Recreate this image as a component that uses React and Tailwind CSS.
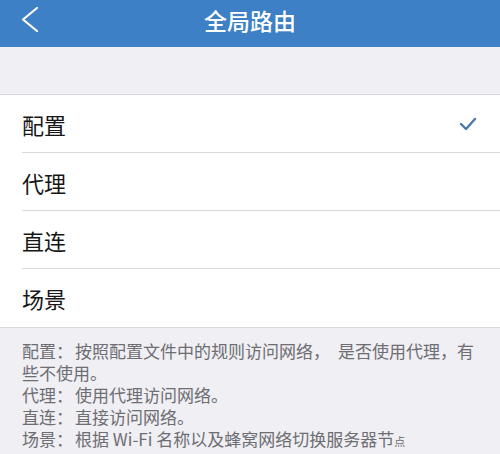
import React from "react";

const rows = ["配置", "代理", "直连", "场景"];

export default function App() {
  return (
    <div
      className="w-[500px] h-[454px] overflow-hidden bg-[#efeff4]"
      style={{ fontFamily: '"Noto Sans CJK SC", "Noto Sans", sans-serif' }}
    >
      <div className="relative h-[47px] bg-[#3d80c6] flex items-center justify-center">
        <svg
          className="absolute left-[20px] top-[6px]"
          width="20"
          height="28"
          viewBox="0 0 20 28"
          fill="none"
        >
          <polyline
            points="17,2 3,13.5 17,25"
            stroke="white"
            strokeWidth="2.2"
            strokeLinecap="round"
            strokeLinejoin="round"
          />
        </svg>
        <span className="text-white text-[23px] font-medium leading-none -mt-[6px]">
          全局路由
        </span>
      </div>
      <div className="h-[47px]" />
      <div className="bg-white border-t border-b border-[#d8d8dc]">
        {rows.map((r, i) => (
          <div key={r} className="pl-[22px] h-[58px]">
            <div
              className={
                "h-full flex items-center justify-between pr-[23px] " +
                (i < rows.length - 1 ? "border-b border-[#d9d9dc]" : "")
              }
            >
              <span className="text-[22px] text-[#161616] leading-none">{r}</span>
              {i === 0 && (
                <svg width="18" height="14" viewBox="0 0 18 14" fill="none">
                  <polyline
                    points="2,7 7,12 16,2"
                    stroke="#4a7aa8"
                    strokeWidth="2.4"
                    strokeLinecap="round"
                    strokeLinejoin="round"
                  />
                </svg>
              )}
            </div>
          </div>
        ))}
      </div>
      <div className="pl-[22px] pr-[20px] pt-[12px] text-[17px] leading-[22px] text-[#6d6d72]">
        <p>
          配置：<span className="ml-[2px]">按照配置文件中的规则访问网络，</span>
          <span className="inline-block w-[8px]" />
          是否使用代理，有些不使用。
        </p>
        <p>
          代理：<span className="ml-[2px]">使用代理访问网络。</span>
        </p>
        <p>
          直连：<span className="ml-[2px]">直接访问网络。</span>
        </p>
        <p>
          场景：<span className="ml-[2px]">根据 Wi-Fi 名称以及蜂窝网络切换服务器节</span>
          <span className="text-[11px]">点</span>
        </p>
      </div>
    </div>
  );
}
